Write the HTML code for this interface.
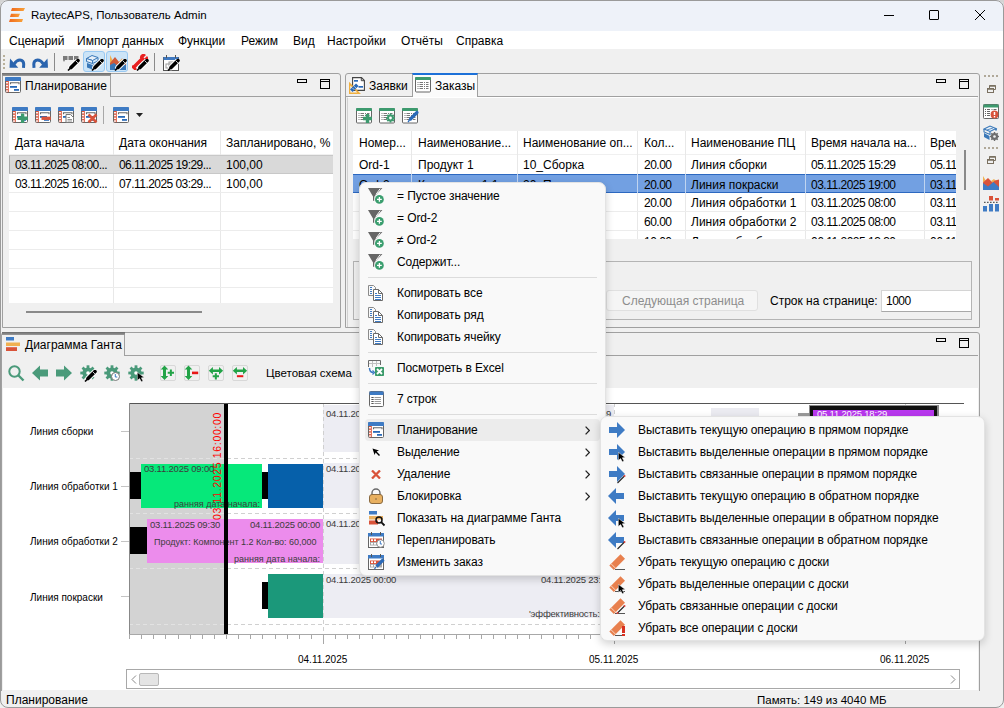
<!DOCTYPE html>
<html><head><meta charset="utf-8">
<style>
*{box-sizing:border-box;margin:0;padding:0}
html,body{width:1004px;height:708px;overflow:hidden;background:#d4d4d4;font-family:"Liberation Sans",sans-serif;font-size:12px;color:#000}
.a{position:absolute}
.t{position:absolute;white-space:nowrap;line-height:14px}
#title{left:0;top:0;width:1004px;height:31px;background:#eef2f9}
#menu{left:0;top:31px;width:1004px;height:18px;background:#fff}
#tb{left:0;top:49px;width:1004px;height:24px;background:#f0f0f0}
.panel{position:absolute;border:1px solid #a0a0a0;border-radius:3px 3px 0 0;background:#f0f0f0}
.tab{position:absolute;border:1px solid #a0a0a0;border-bottom:none;background:#f5f5f5}
.hline{position:absolute;height:1px;background:#a0a0a0}
.n{letter-spacing:-0.5px}
.vline{position:absolute;width:1px;background:#a0a0a0}
</style></head><body>
<svg width="0" height="0" style="position:absolute">
<defs>
<symbol id="plan" viewBox="0 0 16 16"><rect x="0.5" y="0.5" width="15" height="15" rx="1" fill="#fff" stroke="#666"/><path d="M0 1 Q0 0 1 0 H15 Q16 0 16 1 V4 H0Z" fill="#3e7bc4"/><rect x="1" y="4" width="2.8" height="11.2" fill="#d9533a"/><rect x="1.1" y="5" width="1.8" height="1.5" fill="#fff"/><rect x="1.1" y="7.8" width="1.8" height="1.5" fill="#fff"/><rect x="1.1" y="10.6" width="1.8" height="1.5" fill="#fff"/><rect x="1.1" y="13.3" width="1.8" height="1.5" fill="#fff"/><path d="M5.5 7.2 V5.8 H14 V7.2" fill="none" stroke="#666" stroke-width="1.1"/><rect x="5" y="9" width="7" height="1.8" fill="#2a6ab8"/><rect x="9" y="12" width="5" height="1.8" fill="#2a6ab8"/></symbol>
<symbol id="grid" viewBox="0 0 16 16"><rect x="0.5" y="0.5" width="15" height="14.5" rx="1" fill="#fff" stroke="#666"/><path d="M0 1 Q0 0 1 0 H15 Q16 0 16 1 V3 H0Z" fill="#3d9a6e"/><path d="M2.5 5.5 H3.5 M4.5 5.5 H8 M9 5.5 H10 M11 5.5 H13.5 M2.5 7.5 H3.5 M4.5 7.5 H8 M9 7.5 H10 M11 7.5 H13.5 M2.5 9.5 H3.5 M4.5 9.5 H8 M9 9.5 H10 M11 9.5 H13.5 M2.5 11.5 H3.5 M4.5 11.5 H8 M9 11.5 H10 M11 11.5 H13.5" stroke="#555" stroke-width="0.8"/></symbol>
<symbol id="filt" viewBox="0 0 18 18"><path d="M0 1 L14 1 L9 8 L9 15 L6 13 L6 8 Z" fill="#707070"/><circle cx="12.5" cy="13" r="4.5" fill="#3aa06a" stroke="#fff" stroke-width="1"/><path d="M10 13 H15 M12.5 10.5 V15.5" stroke="#fff" stroke-width="1.4"/></symbol>
<symbol id="copy" viewBox="0 0 16 16"><path d="M0.5 0.5 H5.5 L7.5 2.5 V4 M0.5 0.5 V10.5 H5" fill="none" stroke="#8a8a8a"/><path d="M2 2.5 H4 M2 4.5 H4 M2 6.5 H4 M2 8.5 H4" stroke="#3e7bc4" stroke-width="1"/><path d="M5.5 4.5 H10.5 L14.5 8.5 V15.5 H5.5 Z" fill="#fff" stroke="#6a6a6a"/><path d="M10.5 4.5 V8.5 H14.5" fill="none" stroke="#6a6a6a"/><path d="M7 8.5 H9 M7 10.5 H13 M7 12.5 H13 M7 14.5 H13" stroke="#3e7bc4" stroke-width="1"/></symbol>
<symbol id="pen" viewBox="0 0 10 12"><path d="M9 1 L3 8" stroke="#000" stroke-width="3.6" stroke-linecap="round"/><path d="M2.2 8.6 L0.5 11.5" stroke="#000" stroke-width="1.3"/></symbol>
<symbol id="rarr" viewBox="0 0 17 16"><path d="M1 5 H9 V0 L17 8 L9 16 V11 H1 Z" fill="#3e7bc4"/></symbol>
<symbol id="larr" viewBox="0 0 17 16"><path d="M16 5 H8 V0 L0 8 L8 16 V11 H16 Z" fill="#3e7bc4"/></symbol>
<symbol id="cur" viewBox="0 0 9 10"><path d="M0.3 0.3 L0.3 8.5 L2.6 6.6 L4.3 9.8 L6 8.9 L4.3 5.8 L7.3 5.6Z" fill="#000" stroke="#fff" stroke-width="0.5"/></symbol>
<symbol id="eras" viewBox="0 0 18 18"><path d="M12.5 1.2 L17 5.7 L5.8 16.9 L1.3 12.4 Z" fill="#e8804e"/><path d="M3 10.7 L7.5 15.2" stroke="#fbe0d0" stroke-width="0.9"/><path d="M7 16.5 H17" stroke="#555" stroke-width="1"/></symbol>
<symbol id="pen2" viewBox="0 0 13 12"><path d="M11 1.5 L4 8.5" stroke="#fff" stroke-width="5.4" stroke-linecap="round"/><path d="M11 1.5 L4 8.5" stroke="#000" stroke-width="3.6" stroke-linecap="round"/><path d="M8.6 1.6 L10.9 3.9" stroke="#fff" stroke-width="0.8"/><path d="M3.3 9.2 L1 11.5" stroke="#000" stroke-width="1.6"/></symbol>
<symbol id="gear" viewBox="0 0 16 16"><g fill="#4a9a7a"><circle cx="8" cy="8" r="5.6"/><rect x="6.6" y="0.3" width="2.8" height="3" transform="rotate(0 8 8)"/><rect x="6.6" y="0.3" width="2.8" height="3" transform="rotate(45 8 8)"/><rect x="6.6" y="0.3" width="2.8" height="3" transform="rotate(90 8 8)"/><rect x="6.6" y="0.3" width="2.8" height="3" transform="rotate(135 8 8)"/><rect x="6.6" y="0.3" width="2.8" height="3" transform="rotate(180 8 8)"/><rect x="6.6" y="0.3" width="2.8" height="3" transform="rotate(225 8 8)"/><rect x="6.6" y="0.3" width="2.8" height="3" transform="rotate(270 8 8)"/><rect x="6.6" y="0.3" width="2.8" height="3" transform="rotate(315 8 8)"/></g><circle cx="8" cy="8" r="1.8" fill="#fff"/></symbol></defs></svg>
<!-- title bar -->
<div class="a" style="left:0;top:0;width:1004px;height:708px;background:#f0f0f0;border-radius:8px"></div>
<div id="title" class="a" style="border-radius:8px 8px 0 0"></div>
<div class="a" style="left:0;top:0;width:1004px;height:708px;border:1px solid #9a9a9a;border-radius:8px;pointer-events:none;z-index:50"></div>
<svg class="a" style="left:9px;top:8px" width="17" height="15" viewBox="0 0 17 15">
 <defs><linearGradient id="og" x1="0" x2="1"><stop offset="0" stop-color="#f06a1e"/><stop offset="1" stop-color="#f8a23a"/></linearGradient></defs>
 <polygon points="3,0 16,0 14.5,3 2,3" fill="url(#og)"/>
 <polygon points="2,5.7 11,5.7 9.5,8.9 1,8.9" fill="url(#og)"/>
 <polygon points="1,11 14,11 13,14 0,14" fill="url(#og)"/>
</svg>
<div class="t" style="left:31px;top:8px;font-size:11.5px">RaytecAPS, Пользователь Admin</div>
<div class="a" style="left:884px;top:15px;width:10px;height:1px;background:#000"></div>
<div class="a" style="left:929px;top:10px;width:10px;height:10px;border:1px solid #000;border-radius:1px"></div>
<svg class="a" style="left:975px;top:10px" width="10" height="10" viewBox="0 0 10 10"><path d="M0 0L10 10M10 0L0 10" stroke="#000" stroke-width="1"/></svg>
<!-- menu -->
<div id="menu" class="a"></div>
<div class="t" style="left:9px;top:34px">Сценарий</div>
<div class="t" style="left:77px;top:34px">Импорт данных</div>
<div class="t" style="left:178px;top:34px">Функции</div>
<div class="t" style="left:241px;top:34px">Режим</div>
<div class="t" style="left:293px;top:34px">Вид</div>
<div class="t" style="left:327px;top:34px">Настройки</div>
<div class="t" style="left:401px;top:34px">Отчёты</div>
<div class="t" style="left:456px;top:34px">Справка</div>
<!-- toolbar -->
<div id="tb" class="a"></div>
<div class="a" style="left:3px;top:55px;width:2px;height:2px;background:#b8b09a"></div>
<div class="a" style="left:3px;top:59px;width:2px;height:2px;background:#b8b09a"></div>
<div class="a" style="left:3px;top:63px;width:2px;height:2px;background:#b8b09a"></div>
<div class="a" style="left:3px;top:67px;width:2px;height:2px;background:#b8b09a"></div>
<svg class="a" style="left:9px;top:57px" width="17" height="11" viewBox="0 0 16 11"><path d="M0.5 1.5 L0 10.8 L8.8 10.8 Z" fill="#2a64ae"/><path d="M4.5 7.2 C6.5 4 8 3 10.5 3 C13 3 14.2 5 14.2 7 L14 10.8" stroke="#2a64ae" stroke-width="3" fill="none"/></svg>
<svg class="a" style="left:32px;top:57px" width="16" height="11" viewBox="0 0 16 11"><g transform="translate(16,0) scale(-1,1)"><path d="M0.5 1.5 L0 10.8 L8.8 10.8 Z" fill="#2a64ae"/><path d="M4.5 7.2 C6.5 4 8 3 10.5 3 C13 3 14.2 5 14.2 7 L14 10.8" stroke="#2a64ae" stroke-width="3" fill="none"/></g></svg>
<div class="a" style="left:54px;top:53px;width:1px;height:18px;background:#8a8a8a"></div>
<svg class="a" style="left:63px;top:56px" width="16" height="8" viewBox="0 0 16 8"><rect x="0" y="0" width="4.5" height="4" fill="#7a7a7a"/><rect x="5.5" y="0" width="4.5" height="4" fill="#7a7a7a"/><rect x="11" y="0" width="4.5" height="4" fill="#7a7a7a"/><path d="M0 4 L2 4 L1 6 Z" fill="#7a7a7a"/></svg>
<svg class="a" style="left:67px;top:59px" width="13" height="12"><use href="#pen2"/></svg>
<div class="a" style="left:83px;top:51px;width:22px;height:21px;background:#cce4f7;border:1px solid #99c9f2;border-radius:3px"></div>
<div class="a" style="left:106px;top:51px;width:22px;height:21px;background:#cce4f7;border:1px solid #99c9f2;border-radius:3px"></div>
<svg class="a" style="left:86px;top:54px" width="16" height="16" viewBox="0 0 16 16"><path d="M0.5 4.5 L6 1.5 L12 3.5 L6.5 6.5 Z" fill="#e8f0f8" stroke="#3a78b8" stroke-width="1"/><path d="M0.5 4.5 L0.5 7.5 L6.5 9.5 L6.5 6.5 Z" fill="#e8f0f8" stroke="#3a78b8" stroke-width="1"/><path d="M6.5 9.5 L12 7 L12 3.5" fill="none" stroke="#3a78b8"/><path d="M1 9 L6.5 11 L6.5 15.5 L1 13.5 Z" fill="#3a78b8"/><path d="M6.5 11 L11 9 L11 13 L6.5 15.5Z" fill="#2a5f98"/></svg>
<svg class="a" style="left:91px;top:59px" width="13" height="12"><use href="#pen2"/></svg>
<svg class="a" style="left:110px;top:54px" width="16" height="16" viewBox="0 0 16 16"><path d="M0 1 L3 7 L0 9Z" fill="#f0b050"/><path d="M0 9 L5 3 L9 8 L12 4.5 L16 9 L16 16 L0 16Z" fill="#d05a38"/><path d="M9 8 L12 4.5 L14 7 L11 9Z" fill="#f0c070"/><path d="M0 11 L4 9 L8 12 L12 10 L16 11 L16 16 L0 16Z" fill="#3a78b8"/></svg>
<svg class="a" style="left:114px;top:59px" width="13" height="12"><use href="#pen2"/></svg>
<svg class="a" style="left:132px;top:54px" width="16" height="16" viewBox="0 0 16 16"><path d="M2 13 L10 5" stroke="#e82020" stroke-width="3.5" stroke-linecap="round"/><path d="M8 4 A3.5 3.5 0 0 1 14 1 L11.5 3.5 L12.5 4.5 L15 2 A3.5 3.5 0 0 1 12 8Z" fill="#e82020"/><path d="M0 12 L4 16" stroke="#e82020" stroke-width="2.5"/></svg>
<svg class="a" style="left:136px;top:59px" width="13" height="12"><use href="#pen2"/></svg>
<div class="a" style="left:154px;top:53px;width:1px;height:18px;background:#8a8a8a"></div>
<svg class="a" style="left:163px;top:55px" width="17" height="16" viewBox="0 0 17 16"><rect x="0.5" y="2.5" width="15" height="13" fill="#fff" stroke="#555"/><rect x="0.5" y="2" width="15" height="3" fill="#3f78c0"/><rect x="3" y="0" width="1" height="3" fill="#555"/><rect x="12" y="0" width="1" height="3" fill="#555"/><rect x="3" y="9" width="5" height="4" fill="none" stroke="#999"/><rect x="6" y="7" width="5" height="4" fill="none" stroke="#999"/></svg><svg class="a" style="left:167px;top:59px" width="13" height="12"><use href="#pen2"/></svg>

<!-- left panel -->
<div class="panel" style="left:2px;top:73px;width:339px;height:255px"></div>
<div class="a" style="left:2px;top:73px;width:109px;height:3px;background:linear-gradient(#6a6a6a,#9a9a9a)"></div>
<div class="a" style="left:110px;top:75px;width:1px;height:22px;background:#a0a0a0"></div>
<div class="a" style="left:110px;top:96px;width:230px;height:1px;background:#a0a0a0"></div>
<svg class="a" style="left:5px;top:77px" width="16" height="16"><use href="#plan"/></svg>
<div class="t" style="left:25px;top:79px">Планирование</div>
<div class="a" style="left:297px;top:79px;width:10px;height:4px;border:1px solid #000"></div>
<div class="a" style="left:320px;top:79px;width:10px;height:10px;border:1px solid #000"></div><div class="a" style="left:320px;top:81px;width:10px;height:1px;background:#000"></div>
<svg class="a" style="left:12px;top:107px" width="17" height="17" overflow="visible"><use href="#plan" width="16" height="16"/><path d="M5.5 11.3 H15.8 M10.6 6.5 V16" stroke="#3d9a6e" stroke-width="3.4"/></svg>
<svg class="a" style="left:35px;top:107px" width="17" height="17" overflow="visible"><use href="#plan" width="16" height="16"/><path d="M6.5 11.3 H15.8" stroke="#d9533a" stroke-width="3.3"/></svg>
<svg class="a" style="left:58px;top:107px" width="17" height="17" overflow="visible"><use href="#plan" width="16" height="16"/><path d="M8 7.5 H12.5 L15.5 10.5 V15.5 H8 Z" fill="#fff" stroke="#777"/><path d="M9.5 10.5 H12 M9.5 12.5 H14 M9.5 14 H14" stroke="#888" stroke-width="0.9"/></svg>
<svg class="a" style="left:81px;top:107px" width="17" height="17" overflow="visible"><use href="#plan" width="16" height="16"/><path d="M7.5 7.5 L15.5 15.2 M15.5 7.5 L7.5 15.2" stroke="#d9533a" stroke-width="2.6"/></svg>
<div class="a" style="left:103px;top:106px;width:1px;height:18px;background:#a8a8a8"></div>
<svg class="a" style="left:113px;top:107px" width="16" height="16"><use href="#plan"/></svg>
<svg class="a" style="left:136px;top:113px" width="7" height="5"><path d="M0 0 H7 L3.5 4 Z" fill="#222"/></svg>
<div class="a" style="left:9px;top:131px;width:324px;height:172px;background:#fff"></div>
<div class="a" style="left:9px;top:154px;width:324px;height:1px;background:#f0f0f0"></div>
<div class="a" style="left:113px;top:131px;width:1px;height:172px;background:#e8e8e8"></div>
<div class="a" style="left:220px;top:131px;width:1px;height:172px;background:#e8e8e8"></div>
<div class="t" style="left:15px;top:136px">Дата начала</div>
<div class="t" style="left:119px;top:136px">Дата окончания</div>
<div class="t" style="left:226px;top:136px">Запланировано, %</div>
<div class="a" style="left:9px;top:155px;width:324px;height:19px;background:#d9d9d9;border-top:1px solid #c8c8c8;border-bottom:1px solid #c8c8c8;border-left:1px solid #aaa"></div>
<div class="t" style="left:15px;top:158px;letter-spacing:-0.55px">03.11.2025 08:00...</div>
<div class="t" style="left:119px;top:158px;letter-spacing:-0.55px">06.11.2025 19:29...</div>
<div class="t" style="left:226px;top:158px">100,00</div>
<div class="t" style="left:15px;top:177px;letter-spacing:-0.55px">03.11.2025 16:00...</div>
<div class="t" style="left:119px;top:177px;letter-spacing:-0.55px">07.11.2025 03:29...</div>
<div class="t" style="left:226px;top:177px">100,00</div>
<div class="a" style="left:9px;top:192px;width:324px;height:1px;background:#ececec"></div>
<div class="a" style="left:9px;top:211px;width:324px;height:1px;background:#ececec"></div>
<div class="a" style="left:9px;top:230px;width:324px;height:1px;background:#ececec"></div>
<div class="a" style="left:9px;top:249px;width:324px;height:1px;background:#ececec"></div>
<div class="a" style="left:9px;top:268px;width:324px;height:1px;background:#ececec"></div>
<div class="a" style="left:9px;top:287px;width:324px;height:1px;background:#ececec"></div>
<div class="a" style="left:26px;top:311px;width:176px;height:2px;background:#8a8a8a"></div>

<!-- right panel -->
<div class="panel" style="left:345px;top:73px;width:635px;height:255px"></div>
<div class="a" style="left:345px;top:96px;width:67px;height:1px;background:#a0a0a0"></div>
<div class="a" style="left:477px;top:96px;width:501px;height:1px;background:#a0a0a0"></div>
<div class="a" style="left:412px;top:73px;width:66px;height:24px;background:#fbfbfb;border-left:1px solid #a0a0a0;border-right:1px solid #a0a0a0;border-top:2px solid #1c70d8"></div>
<svg class="a" style="left:349px;top:77px" width="17" height="17" viewBox="0 0 17 17"><path d="M3.6 0.6 H12.5 L15.4 3.5 V13.4 H3.6 Z" fill="#fff" stroke="#444" stroke-width="1.1"/><path d="M12.3 0.6 V3.7 H15.4" fill="none" stroke="#444" stroke-width="1"/><rect x="5" y="3" width="4" height="1.7" fill="#2a6ab8"/><rect x="9.5" y="9" width="4.5" height="1.7" fill="#2a6ab8"/><path d="M0.5 6.5 V16.2 H10 Z" fill="none" stroke="#f0b040" stroke-width="1.6"/><path d="M2.3 13.8 L8.3 7.8" stroke="#2a6ab8" stroke-width="3.6"/><path d="M3.5 11 L5.3 12.8 M5.2 9.3 L7 11.1" stroke="#e8f0f8" stroke-width="0.7"/></svg>
<div class="t" style="left:369px;top:79px">Заявки</div>
<svg class="a" style="left:415px;top:77px" width="16" height="16"><use href="#grid"/></svg>
<div class="t" style="left:435px;top:79px">Заказы</div>
<div class="a" style="left:936px;top:79px;width:10px;height:4px;border:1px solid #000"></div>
<div class="a" style="left:959px;top:79px;width:10px;height:10px;border:1px solid #000"></div><div class="a" style="left:959px;top:81px;width:10px;height:1px;background:#000"></div>
<div class="a" style="left:347px;top:97px;width:630px;height:230px;border-left:1px solid #d0d0d0;border-top:1px solid #fff"></div>
<svg class="a" style="left:356px;top:108px" width="17" height="16" overflow="visible"><use href="#grid" width="16" height="16"/><path d="M7 10.5 H16 M11.5 6 V15" stroke="#3d9a6e" stroke-width="3.4"/></svg>
<svg class="a" style="left:379px;top:108px" width="17" height="16" overflow="visible"><use href="#grid" width="16" height="16"/><g fill="#3d9a6e"><rect x="10.6" y="5.5" width="1.8" height="2.4" transform="rotate(0 11.5 10)"/><rect x="10.6" y="5.5" width="1.8" height="2.4" transform="rotate(45 11.5 10)"/><rect x="10.6" y="5.5" width="1.8" height="2.4" transform="rotate(90 11.5 10)"/><rect x="10.6" y="5.5" width="1.8" height="2.4" transform="rotate(135 11.5 10)"/><rect x="10.6" y="5.5" width="1.8" height="2.4" transform="rotate(180 11.5 10)"/><rect x="10.6" y="5.5" width="1.8" height="2.4" transform="rotate(225 11.5 10)"/><rect x="10.6" y="5.5" width="1.8" height="2.4" transform="rotate(270 11.5 10)"/><rect x="10.6" y="5.5" width="1.8" height="2.4" transform="rotate(315 11.5 10)"/><circle cx="11.5" cy="10" r="3.4"/></g><circle cx="11.5" cy="10" r="1.4" fill="#fff"/></svg>
<svg class="a" style="left:402px;top:108px" width="17" height="16" overflow="visible"><use href="#grid" width="16" height="16"/><path d="M15 4.5 L8.5 11" stroke="#2a6ab8" stroke-width="3.2" stroke-linecap="round"/><path d="M7.5 12 L6 14" stroke="#2a6ab8" stroke-width="1.3"/></svg>
<div class="a" style="left:353px;top:131px;width:603px;height:108px;background:#fff;overflow:hidden">
 <div class="a" style="left:0;top:23px;width:603px;height:1px;background:#f0f0f0"></div>
 <div class="a" style="left:58px;top:0;width:1px;height:108px;background:#e8e8e8"></div>
 <div class="a" style="left:164px;top:0;width:1px;height:108px;background:#e8e8e8"></div>
 <div class="a" style="left:284px;top:0;width:1px;height:108px;background:#e8e8e8"></div>
 <div class="a" style="left:332px;top:0;width:1px;height:108px;background:#e8e8e8"></div>
 <div class="a" style="left:452px;top:0;width:1px;height:108px;background:#e8e8e8"></div>
 <div class="a" style="left:571px;top:0;width:1px;height:108px;background:#e8e8e8"></div>
 <div class="a" style="left:0;top:61px;width:603px;height:1px;background:#ececec"></div>
 <div class="a" style="left:0;top:80px;width:603px;height:1px;background:#ececec"></div>
 <div class="a" style="left:0;top:99px;width:603px;height:1px;background:#ececec"></div>
 <div class="t" style="left:6px;top:5px">Номер...</div>
 <div class="t" style="left:65px;top:5px">Наименование...</div>
 <div class="t" style="left:170px;top:5px">Наименование оп...</div>
 <div class="t" style="left:291px;top:5px">Кол...</div>
 <div class="t" style="left:338px;top:5px">Наименование ПЦ</div>
 <div class="t" style="left:458px;top:5px">Время начала на...</div>
 <div class="t" style="left:577px;top:5px">Время</div>
 <div class="t" style="left:6px;top:27px">Ord-1</div>
 <div class="t" style="left:65px;top:27px">Продукт 1</div>
 <div class="t" style="left:170px;top:27px">10_Сборка</div>
 <div class="t n" style="left:291px;top:27px">20.00</div>
 <div class="t" style="left:338px;top:27px">Линия сборки</div>
 <div class="t n" style="left:458px;top:27px">05.11.2025 15:29</div>
 <div class="t n" style="left:577px;top:27px">05.11.2025</div>
 <div class="a" style="left:0;top:43px;width:603px;height:19px;background:#72a0e2;border-top:1px solid #2c68c0;border-bottom:1px solid #2c68c0"></div>
 <div class="a" style="left:58px;top:43px;width:1px;height:19px;background:#c0d4f0"></div>
 <div class="a" style="left:164px;top:43px;width:1px;height:19px;background:#c0d4f0"></div>
 <div class="a" style="left:284px;top:43px;width:1px;height:19px;background:#c0d4f0"></div>
 <div class="a" style="left:332px;top:43px;width:1px;height:19px;background:#c0d4f0"></div>
 <div class="a" style="left:452px;top:43px;width:1px;height:19px;background:#c0d4f0"></div>
 <div class="a" style="left:571px;top:43px;width:1px;height:19px;background:#c0d4f0"></div>
 <div class="t" style="left:6px;top:47px">Ord-2</div>
 <div class="t" style="left:65px;top:47px">Компонент 1.1</div>
 <div class="t" style="left:170px;top:47px">20_Покраска</div>
 <div class="t n" style="left:291px;top:47px">20.00</div>
 <div class="t" style="left:338px;top:47px">Линия покраски</div>
 <div class="t n" style="left:458px;top:47px">03.11.2025 19:00</div>
 <div class="t n" style="left:577px;top:47px">03.11.2025</div>
 <div class="t n" style="left:291px;top:65px">20.00</div>
 <div class="t" style="left:338px;top:65px">Линия обработки 1</div>
 <div class="t n" style="left:458px;top:65px">03.11.2025 08:00</div>
 <div class="t n" style="left:577px;top:65px">03.11.2025</div>
 <div class="t n" style="left:291px;top:84px">60.00</div>
 <div class="t" style="left:338px;top:84px">Линия обработки 2</div>
 <div class="t n" style="left:458px;top:84px">03.11.2025 08:00</div>
 <div class="t n" style="left:577px;top:84px">03.11.2025</div>
 <div class="t n" style="left:291px;top:104px">10.00</div>
 <div class="t" style="left:338px;top:104px">Линия обработки</div>
 <div class="t n" style="left:458px;top:104px">06.11.2025 13:30</div>
 <div class="t n" style="left:577px;top:104px">06.11.2025</div>
</div>
<div class="a" style="left:964px;top:150px;width:2px;height:40px;background:#8a8a8a"></div>
<div class="a" style="left:353px;top:261px;width:619px;height:59px;border:1px solid #b4b4b4"></div>
<div class="a" style="left:606px;top:290px;width:152px;height:21px;background:#f5f5f5;border:1px solid #e0e0e0;border-radius:3px"></div>
<div class="t" style="left:622px;top:294px;color:#8d8d8d">Следующая страница</div>
<div class="t" style="left:770px;top:294px">Строк на странице:</div>
<div class="a" style="left:881px;top:290px;width:90px;height:22px;background:#fff;border:1px solid #d4d4d4;border-bottom-color:#a8a8a8;border-right:none"></div>
<div class="t n" style="left:886px;top:294px">1000</div>
<!-- right strip -->
<div class="a" style="left:984px;top:75px;width:2px;height:2px;background:#b0a898"></div><div class="a" style="left:988px;top:75px;width:2px;height:2px;background:#b0a898"></div><div class="a" style="left:992px;top:75px;width:2px;height:2px;background:#b0a898"></div><div class="a" style="left:996px;top:75px;width:2px;height:2px;background:#b0a898"></div>
<svg class="a" style="left:987px;top:85px" width="9" height="8" viewBox="0 0 9 8"><path d="M2.5 3 V0.5 H8.5 V4.5 H6.5" fill="none" stroke="#7a7060"/><path d="M2.5 1 H8.5" stroke="#7a7060" stroke-width="1.5"/><rect x="0.5" y="3.5" width="6" height="4" fill="#f0f0f0" stroke="#7a7060"/><path d="M0.5 4 H6.5" stroke="#7a7060" stroke-width="1.5"/></svg>
<svg class="a" style="left:983px;top:104px" width="16" height="16" viewBox="0 0 16 16"><rect x="0.5" y="0.5" width="15" height="14" rx="0.8" fill="#fff" stroke="#666"/><rect x="0.5" y="0.5" width="15" height="3" fill="#3d9a6e"/><path d="M2 5.5 H3 M4 5.5 H7 M8.5 5.5 H9.5 M10.5 5.5 H13.5 M2 7.5 H3 M4 7.5 H7 M2 9.5 H3 M4 9.5 H7 M2 11.5 H3 M4 11.5 H7" stroke="#555" stroke-width="0.9"/><circle cx="11.5" cy="10.5" r="3.9" fill="#d9533a"/><path d="M11.5 8 V11" stroke="#fff" stroke-width="1.5"/><rect x="10.8" y="12" width="1.4" height="1.4" fill="#fff"/></svg>
<svg class="a" style="left:983px;top:125px" width="17" height="17" viewBox="0 0 17 17"><path d="M1 4 L7 1 L13 3.5 L7 6.5 Z" fill="#e8f0f8" stroke="#3a78b8" stroke-width="1.1"/><path d="M1 4 V7 L7 9.5 V6.5" fill="none" stroke="#3a78b8" stroke-width="1.1"/><path d="M13 3.5 V5.5" stroke="#3a78b8" stroke-width="1.8"/><path d="M1 8 V12 L6.5 15 V11" fill="#3a78b8"/><path d="M4 5 L10 3" stroke="#3a78b8" stroke-width="0.8"/><g fill="#6e6e6e"><rect x="10.8" y="7" width="1.4" height="2.2" transform="rotate(0 11.5 11.5)"/><rect x="10.8" y="7" width="1.4" height="2.2" transform="rotate(45 11.5 11.5)"/><rect x="10.8" y="7" width="1.4" height="2.2" transform="rotate(90 11.5 11.5)"/><rect x="10.8" y="7" width="1.4" height="2.2" transform="rotate(135 11.5 11.5)"/><rect x="10.8" y="7" width="1.4" height="2.2" transform="rotate(180 11.5 11.5)"/><rect x="10.8" y="7" width="1.4" height="2.2" transform="rotate(225 11.5 11.5)"/><rect x="10.8" y="7" width="1.4" height="2.2" transform="rotate(270 11.5 11.5)"/><rect x="10.8" y="7" width="1.4" height="2.2" transform="rotate(315 11.5 11.5)"/><circle cx="11.5" cy="11.5" r="3.6"/></g><circle cx="11.5" cy="11.5" r="1.3" fill="#f0f0f0"/></svg>
<div class="a" style="left:984px;top:147px;width:2px;height:2px;background:#b0a898"></div><div class="a" style="left:988px;top:147px;width:2px;height:2px;background:#b0a898"></div><div class="a" style="left:992px;top:147px;width:2px;height:2px;background:#b0a898"></div><div class="a" style="left:996px;top:147px;width:2px;height:2px;background:#b0a898"></div>
<svg class="a" style="left:987px;top:156px" width="9" height="8" viewBox="0 0 9 8"><path d="M2.5 3 V0.5 H8.5 V4.5 H6.5" fill="none" stroke="#7a7060"/><path d="M2.5 1 H8.5" stroke="#7a7060" stroke-width="1.5"/><rect x="0.5" y="3.5" width="6" height="4" fill="#f0f0f0" stroke="#7a7060"/><path d="M0.5 4 H6.5" stroke="#7a7060" stroke-width="1.5"/></svg>
<svg class="a" style="left:983px;top:176px" width="16" height="14" viewBox="0 0 16 14"><path d="M0 0 L3 5 L0 6.5 Z" fill="#f0b050"/><path d="M8 5 L11 3 L14 6 L11 8 Z" fill="#f0b050"/><path d="M0 6.5 L5 2 L9.5 6.5 L12 4.5 L16 3.5 L16 12 L0 12 Z" fill="#d9533a"/><path d="M0 7 L5 10.5 L10.5 6 L16 11 L16 14 L0 14 Z" fill="#3e7bc4"/></svg>
<svg class="a" style="left:983px;top:195px" width="16" height="17" viewBox="0 0 16 17"><rect x="0" y="11" width="4" height="5.5" fill="#3e7bc4"/><rect x="6" y="9" width="4" height="7.5" fill="#3e7bc4"/><rect x="12" y="9" width="4" height="7.5" fill="#3e7bc4"/><rect x="6" y="1" width="4" height="4.5" fill="#d9533a"/><rect x="12" y="3" width="4" height="2.5" fill="#d9533a"/><path d="M1 7.3 H16" stroke="#333" stroke-width="1" stroke-dasharray="1.6 1.4"/></svg>

<!-- gantt panel -->
<div class="panel" style="left:1px;top:332px;width:979px;height:360px"></div>
<div class="a" style="left:2px;top:332px;width:123px;height:3px;background:linear-gradient(#6a6a6a,#9a9a9a)"></div>
<div class="a" style="left:124px;top:335px;width:1px;height:21px;background:#a0a0a0"></div>
<div class="a" style="left:124px;top:355px;width:854px;height:1px;background:#a0a0a0"></div>
<svg class="a" style="left:6px;top:337px" width="15" height="15" viewBox="0 0 15 15"><rect x="0" y="0" width="8" height="3.5" fill="#3e7bc4"/><rect x="0" y="5.5" width="14" height="3.5" fill="#f0b050"/><rect x="0" y="10.2" width="11" height="3.8" fill="#d9533a"/></svg>
<div class="t" style="left:25px;top:338px">Диаграмма Ганта</div>
<div class="a" style="left:936px;top:338px;width:10px;height:4px;border:1px solid #000"></div>
<div class="a" style="left:959px;top:338px;width:10px;height:10px;border:1px solid #000"></div><div class="a" style="left:959px;top:340px;width:10px;height:1px;background:#000"></div>
<svg class="a" style="left:8px;top:365px" width="17" height="17" viewBox="0 0 17 17"><circle cx="6.5" cy="6.5" r="5.2" fill="none" stroke="#4a9a7a" stroke-width="2"/><path d="M10.5 10.5 L15.5 15.5" stroke="#4a9a7a" stroke-width="2.4"/></svg>
<svg class="a" style="left:32px;top:365px" width="16" height="16" viewBox="0 0 16 16"><path d="M0 8 L8 0.5 L8 4.5 L16 4.5 L16 11.5 L8 11.5 L8 15.5Z" fill="#4a9a7a"/></svg>
<svg class="a" style="left:56px;top:365px" width="16" height="16" viewBox="0 0 16 16"><path d="M16 8 L8 0.5 L8 4.5 L0 4.5 L0 11.5 L8 11.5 L8 15.5Z" fill="#4a9a7a"/></svg>
<svg class="a" style="left:80px;top:365px" width="17" height="17" viewBox="0 0 17 17"><use href="#gear" x="0" y="0" width="16" height="16"/></svg><svg class="a" style="left:84px;top:370px" width="13" height="12"><use href="#pen2"/></svg>
<svg class="a" style="left:104px;top:365px" width="17" height="17" viewBox="0 0 17 17"><use href="#gear" x="0" y="0" width="16" height="16"/><circle cx="11.5" cy="11.5" r="4" fill="#fff" stroke="#777" stroke-width="1"/><path d="M11.3 9 V12 H13.3" stroke="#3e7bc4" stroke-width="1" fill="none"/></svg>
<svg class="a" style="left:128px;top:365px" width="17" height="17" viewBox="0 0 17 17"><use href="#gear" x="0" y="0" width="16" height="16"/></svg><svg class="a" style="left:137px;top:372px" width="9" height="10"><use href="#cur"/></svg>
<div class="a" style="left:160px;top:365px;width:16px;height:16px;border:1px solid #d8d8d8;border-radius:2px"></div>
<div class="a" style="left:184px;top:365px;width:16px;height:16px;border:1px solid #d8d8d8;border-radius:2px"></div>
<div class="a" style="left:208px;top:365px;width:16px;height:16px;border:1px solid #d8d8d8;border-radius:2px"></div>
<div class="a" style="left:232px;top:365px;width:16px;height:16px;border:1px solid #d8d8d8;border-radius:2px"></div>
<svg class="a" style="left:160px;top:365px" width="16" height="16" viewBox="0 0 16 16"><path d="M4.5 0.5 L8.3 4.6 H6 V10.9 H8.3 L4.5 15 L0.7 10.9 H3 V4.6 H0.7 Z" fill="#22a347"/><path d="M7.7 7.8 H14 M10.85 4.6 V11" stroke="#22a347" stroke-width="2"/></svg>
<svg class="a" style="left:184px;top:365px" width="16" height="16" viewBox="0 0 16 16"><path d="M4.5 0.5 L8.3 4.6 H6 V10.9 H8.3 L4.5 15 L0.7 10.9 H3 V4.6 H0.7 Z" fill="#22a347"/><path d="M8 7.9 H14.2" stroke="#e81818" stroke-width="2.6"/></svg>
<svg class="a" style="left:208px;top:365px" width="16" height="16" viewBox="0 0 16 16"><path d="M0.8 5.7 L4.9 1.9 V4.4 H11 V1.9 L15.1 5.7 L11 9.5 V7 H4.9 V9.5 Z" fill="#22a347"/><path d="M4.7 11.3 H11 M7.85 8.2 V14.5" stroke="#22a347" stroke-width="2"/></svg>
<svg class="a" style="left:232px;top:365px" width="16" height="16" viewBox="0 0 16 16"><path d="M0.8 5.7 L4.9 1.9 V4.4 H11 V1.9 L15.1 5.7 L11 9.5 V7 H4.9 V9.5 Z" fill="#22a347"/><path d="M4.9 11.2 H11.3" stroke="#e81818" stroke-width="2"/></svg>
<div class="t" style="left:266px;top:366px;font-size:11.5px">Цветовая схема</div>
<!-- chart -->
<div class="a" style="left:3px;top:388px;width:975px;height:302px;background:#fff"></div>
<div class="a" style="left:129px;top:403px;width:835px;height:231px;overflow:hidden" id="chart">
 <div class="a" style="left:0;top:0;width:96px;height:231px;background:#d3d3d3"></div>
 <div class="a" style="left:194px;top:2px;width:291px;height:47px;background:#ededf3"></div>
 <div class="a" style="left:194px;top:60px;width:291px;height:45px;background:#ededf3"></div>
 <div class="a" style="left:194px;top:116px;width:291px;height:45px;background:#ededf3"></div>
 <div class="a" style="left:194px;top:171px;width:291px;height:44px;background:#ededf3"></div>
 <div class="a" style="left:0;top:55px;width:835px;height:1px;background:repeating-linear-gradient(90deg,#d0d0d0 0 4px,transparent 4px 7px)"></div>
 <div class="a" style="left:0;top:110px;width:835px;height:1px;background:repeating-linear-gradient(90deg,#d0d0d0 0 4px,transparent 4px 7px)"></div>
 <div class="a" style="left:0;top:165px;width:835px;height:1px;background:repeating-linear-gradient(90deg,#d0d0d0 0 4px,transparent 4px 7px)"></div>
 <div class="a" style="left:0;top:221px;width:835px;height:1px;background:repeating-linear-gradient(90deg,#d0d0d0 0 4px,transparent 4px 7px)"></div>
 <div class="a" style="left:0;top:55px;width:95px;height:1px;background:repeating-linear-gradient(90deg,#e2e2e2 0 4px,transparent 4px 7px)"></div><div class="a" style="left:0;top:110px;width:95px;height:1px;background:repeating-linear-gradient(90deg,#e2e2e2 0 4px,transparent 4px 7px)"></div><div class="a" style="left:0;top:165px;width:95px;height:1px;background:repeating-linear-gradient(90deg,#e2e2e2 0 4px,transparent 4px 7px)"></div><div class="a" style="left:0;top:221px;width:95px;height:1px;background:repeating-linear-gradient(90deg,#e2e2e2 0 4px,transparent 4px 7px)"></div><div class="a" style="left:194px;top:0;width:1px;height:231px;background:repeating-linear-gradient(180deg,#d0d0d0 0 4px,transparent 4px 7px)"></div>
 <div class="a" style="left:485px;top:0;width:1px;height:231px;background:repeating-linear-gradient(180deg,#d0d0d0 0 4px,transparent 4px 7px)"></div>
 <div class="a" style="left:776px;top:0;width:1px;height:231px;background:repeating-linear-gradient(180deg,#d0d0d0 0 4px,transparent 4px 7px)"></div>
 <!-- bars -->
 <div class="a" style="left:0;top:69px;width:12px;height:27px;background:#000"></div>
 <div class="a" style="left:12px;top:61px;width:121px;height:44px;background:#06e87a"></div>
 <div class="a" style="left:133px;top:69px;width:6px;height:27px;background:#000"></div>
 <div class="a" style="left:139px;top:61px;width:55px;height:44px;background:#0660aa"></div>
 <div class="a" style="left:0;top:124px;width:18px;height:27px;background:#000"></div>
 <div class="a" style="left:18px;top:116px;width:176px;height:44px;background:#ec8cec"></div>
 <div class="a" style="left:133px;top:179px;width:6px;height:27px;background:#000"></div>
 <div class="a" style="left:139px;top:171px;width:55px;height:44px;background:#1b987a"></div>
 <div class="a" style="left:582px;top:5px;width:48px;height:20px;background:#ebebf1"></div>
 <div class="t" style="left:15px;top:59px;font-size:9.5px;letter-spacing:-0.2px;color:#3c3c3c">03.11.2025 09:00</div>
 <div class="t" style="left:45px;top:94px;font-size:9px;color:#3c3c3c">ранняя дата начала:</div>
 <div class="t" style="left:21px;top:115px;font-size:9.5px;letter-spacing:-0.2px;color:#3c3c3c">03.11.2025 09:30</div>
 <div class="t" style="left:121px;top:115px;font-size:9.5px;letter-spacing:-0.2px;color:#3c3c3c">04.11.2025 00:00</div>
 <div class="t" style="left:25px;top:132px;font-size:9px;color:#3c3c3c">Продукт: Компонент 1.2 Кол-во: 60,000</div>
 <div class="t" style="left:105px;top:149px;font-size:9px;color:#3c3c3c">ранняя дата начала:</div>
 <div class="t" style="left:197px;top:4px;font-size:9.5px;letter-spacing:-0.2px;color:#3c3c3c">04.11.2025 00:00</div>
 <div class="t" style="left:197px;top:59px;font-size:9.5px;letter-spacing:-0.2px;color:#3c3c3c">04.11.2025 00:00</div>
 <div class="t" style="left:197px;top:114px;font-size:9.5px;letter-spacing:-0.2px;color:#3c3c3c">04.11.2025 00:00</div>
 <div class="t" style="left:197px;top:170px;font-size:9.5px;letter-spacing:-0.2px;color:#3c3c3c">04.11.2025 00:00</div>
 <div class="t" style="left:412px;top:170px;font-size:9.5px;letter-spacing:-0.2px;color:#3c3c3c">04.11.2025 23:59</div><div class="t" style="left:412px;top:4px;font-size:9.5px;letter-spacing:-0.2px;color:#3c3c3c">04.11.2025 23:59</div><div class="t" style="left:412px;top:59px;font-size:9.5px;letter-spacing:-0.2px;color:#3c3c3c">04.11.2025 23:59</div><div class="t" style="left:412px;top:114px;font-size:9.5px;letter-spacing:-0.2px;color:#3c3c3c">04.11.2025 23:59</div>
 <div class="t" style="left:400px;top:204px;font-size:9.5px;letter-spacing:-0.2px;color:#3c3c3c">'эффективность:0</div>
 <div class="a" style="left:669px;top:10px;width:14px;height:20px;background:#9a9a9a"></div><div class="a" style="left:680px;top:2px;width:130px;height:30px;background:#8a8a8a"></div><div class="a" style="left:681px;top:3px;width:127px;height:30px;background:#111"></div><div class="a" style="left:684px;top:6.5px;width:121px;height:30px;background:#b838ee"></div>
 <div class="t" style="left:688px;top:4px;font-size:9.5px;letter-spacing:-0.2px;color:#fff">05.11.2025 18:29</div>
 <div class="a" style="left:95px;top:0;width:4px;height:231px;background:#000"></div>
 <div class="t" style="font-size:10.5px;letter-spacing:0.65px;color:#f00;transform:rotate(-90deg);transform-origin:0 0;left:81px;top:117px;width:110px">03.11.2025 16:00:00</div>
</div>
<div class="a" style="left:129px;top:403px;width:835px;height:1px;background:#555"></div>
<div class="a" style="left:129px;top:403px;width:1px;height:231px;background:#888"></div>
<div class="a" style="left:129px;top:634px;width:835px;height:1px;background:#a8a8a8"></div>
<div class="a" style="left:129.0px;top:634px;width:1px;height:5px;background:#a8a8a8"></div><div class="a" style="left:141.1px;top:634px;width:1px;height:5px;background:#a8a8a8"></div><div class="a" style="left:153.2px;top:634px;width:1px;height:5px;background:#a8a8a8"></div><div class="a" style="left:165.4px;top:634px;width:1px;height:5px;background:#a8a8a8"></div><div class="a" style="left:177.5px;top:634px;width:1px;height:5px;background:#a8a8a8"></div><div class="a" style="left:189.6px;top:634px;width:1px;height:5px;background:#a8a8a8"></div><div class="a" style="left:201.8px;top:634px;width:1px;height:5px;background:#a8a8a8"></div><div class="a" style="left:213.9px;top:634px;width:1px;height:5px;background:#a8a8a8"></div><div class="a" style="left:226.0px;top:634px;width:1px;height:5px;background:#a8a8a8"></div><div class="a" style="left:238.1px;top:634px;width:1px;height:5px;background:#a8a8a8"></div><div class="a" style="left:250.2px;top:634px;width:1px;height:5px;background:#a8a8a8"></div><div class="a" style="left:262.4px;top:634px;width:1px;height:5px;background:#a8a8a8"></div><div class="a" style="left:274.5px;top:634px;width:1px;height:5px;background:#a8a8a8"></div><div class="a" style="left:286.6px;top:634px;width:1px;height:5px;background:#a8a8a8"></div><div class="a" style="left:298.8px;top:634px;width:1px;height:5px;background:#a8a8a8"></div><div class="a" style="left:310.9px;top:634px;width:1px;height:5px;background:#a8a8a8"></div><div class="a" style="left:323.0px;top:634px;width:1px;height:10px;background:#a8a8a8"></div><div class="a" style="left:335.1px;top:634px;width:1px;height:5px;background:#a8a8a8"></div><div class="a" style="left:347.2px;top:634px;width:1px;height:5px;background:#a8a8a8"></div><div class="a" style="left:359.4px;top:634px;width:1px;height:5px;background:#a8a8a8"></div><div class="a" style="left:371.5px;top:634px;width:1px;height:5px;background:#a8a8a8"></div><div class="a" style="left:383.6px;top:634px;width:1px;height:5px;background:#a8a8a8"></div><div class="a" style="left:395.8px;top:634px;width:1px;height:5px;background:#a8a8a8"></div><div class="a" style="left:407.9px;top:634px;width:1px;height:5px;background:#a8a8a8"></div><div class="a" style="left:420.0px;top:634px;width:1px;height:5px;background:#a8a8a8"></div><div class="a" style="left:432.1px;top:634px;width:1px;height:5px;background:#a8a8a8"></div><div class="a" style="left:444.2px;top:634px;width:1px;height:5px;background:#a8a8a8"></div><div class="a" style="left:456.4px;top:634px;width:1px;height:5px;background:#a8a8a8"></div><div class="a" style="left:468.5px;top:634px;width:1px;height:5px;background:#a8a8a8"></div><div class="a" style="left:480.6px;top:634px;width:1px;height:5px;background:#a8a8a8"></div><div class="a" style="left:492.8px;top:634px;width:1px;height:5px;background:#a8a8a8"></div><div class="a" style="left:504.9px;top:634px;width:1px;height:5px;background:#a8a8a8"></div><div class="a" style="left:517.0px;top:634px;width:1px;height:5px;background:#a8a8a8"></div><div class="a" style="left:529.1px;top:634px;width:1px;height:5px;background:#a8a8a8"></div><div class="a" style="left:541.2px;top:634px;width:1px;height:5px;background:#a8a8a8"></div><div class="a" style="left:553.4px;top:634px;width:1px;height:5px;background:#a8a8a8"></div><div class="a" style="left:565.5px;top:634px;width:1px;height:5px;background:#a8a8a8"></div><div class="a" style="left:577.6px;top:634px;width:1px;height:5px;background:#a8a8a8"></div><div class="a" style="left:589.8px;top:634px;width:1px;height:5px;background:#a8a8a8"></div><div class="a" style="left:601.9px;top:634px;width:1px;height:5px;background:#a8a8a8"></div><div class="a" style="left:614.0px;top:634px;width:1px;height:10px;background:#a8a8a8"></div><div class="a" style="left:626.1px;top:634px;width:1px;height:5px;background:#a8a8a8"></div><div class="a" style="left:638.2px;top:634px;width:1px;height:5px;background:#a8a8a8"></div><div class="a" style="left:650.4px;top:634px;width:1px;height:5px;background:#a8a8a8"></div><div class="a" style="left:662.5px;top:634px;width:1px;height:5px;background:#a8a8a8"></div><div class="a" style="left:674.6px;top:634px;width:1px;height:5px;background:#a8a8a8"></div><div class="a" style="left:686.8px;top:634px;width:1px;height:5px;background:#a8a8a8"></div><div class="a" style="left:698.9px;top:634px;width:1px;height:5px;background:#a8a8a8"></div><div class="a" style="left:711.0px;top:634px;width:1px;height:5px;background:#a8a8a8"></div><div class="a" style="left:723.1px;top:634px;width:1px;height:5px;background:#a8a8a8"></div><div class="a" style="left:735.2px;top:634px;width:1px;height:5px;background:#a8a8a8"></div><div class="a" style="left:747.4px;top:634px;width:1px;height:5px;background:#a8a8a8"></div><div class="a" style="left:759.5px;top:634px;width:1px;height:5px;background:#a8a8a8"></div><div class="a" style="left:771.6px;top:634px;width:1px;height:5px;background:#a8a8a8"></div><div class="a" style="left:783.8px;top:634px;width:1px;height:5px;background:#a8a8a8"></div><div class="a" style="left:795.9px;top:634px;width:1px;height:5px;background:#a8a8a8"></div><div class="a" style="left:808.0px;top:634px;width:1px;height:5px;background:#a8a8a8"></div><div class="a" style="left:820.1px;top:634px;width:1px;height:5px;background:#a8a8a8"></div><div class="a" style="left:832.2px;top:634px;width:1px;height:5px;background:#a8a8a8"></div><div class="a" style="left:844.4px;top:634px;width:1px;height:5px;background:#a8a8a8"></div><div class="a" style="left:856.5px;top:634px;width:1px;height:5px;background:#a8a8a8"></div><div class="a" style="left:868.6px;top:634px;width:1px;height:5px;background:#a8a8a8"></div><div class="a" style="left:880.8px;top:634px;width:1px;height:5px;background:#a8a8a8"></div><div class="a" style="left:892.9px;top:634px;width:1px;height:5px;background:#a8a8a8"></div><div class="a" style="left:905.0px;top:634px;width:1px;height:10px;background:#a8a8a8"></div><div class="a" style="left:917.1px;top:634px;width:1px;height:5px;background:#a8a8a8"></div><div class="a" style="left:929.2px;top:634px;width:1px;height:5px;background:#a8a8a8"></div><div class="a" style="left:941.4px;top:634px;width:1px;height:5px;background:#a8a8a8"></div><div class="a" style="left:953.5px;top:634px;width:1px;height:5px;background:#a8a8a8"></div>
<div class="a" style="left:121px;top:431px;width:8px;height:1px;background:#c4c4c4"></div>
<div class="a" style="left:121px;top:486px;width:8px;height:1px;background:#c4c4c4"></div>
<div class="a" style="left:121px;top:541px;width:8px;height:1px;background:#c4c4c4"></div>
<div class="a" style="left:121px;top:596px;width:8px;height:1px;background:#c4c4c4"></div>
<div class="t" style="left:30px;top:426px;font-size:10px;line-height:12px">Линия сборки</div>
<div class="t" style="left:30px;top:481px;font-size:10px;line-height:12px">Линия обработки 1</div>
<div class="t" style="left:30px;top:536px;font-size:10px;line-height:12px">Линия обработки 2</div>
<div class="t" style="left:30px;top:592px;font-size:10px;line-height:12px">Линия покраски</div>
<div class="t" style="left:298px;top:654px;font-size:10px;line-height:12px">04.11.2025</div>
<div class="t" style="left:589px;top:654px;font-size:10px;line-height:12px">05.11.2025</div>
<div class="t" style="left:880px;top:654px;font-size:10px;line-height:12px">06.11.2025</div>
<div class="a" style="left:126px;top:669px;width:834px;height:20px;background:#fff;border:1px solid #a8a8a8"></div>
<svg class="a" style="left:131px;top:675px" width="6" height="9" viewBox="0 0 6 9"><path d="M5 0.5 L1 4.5 L5 8.5" stroke="#888" fill="none"/></svg>
<svg class="a" style="left:950px;top:675px" width="6" height="9" viewBox="0 0 6 9"><path d="M1 0.5 L5 4.5 L1 8.5" stroke="#888" fill="none"/></svg>
<div class="a" style="left:139px;top:673px;width:20px;height:13px;background:#e4e4e4;border:1px solid #b8b8b8;border-radius:2px"></div>


<!-- context menu -->
<div class="a" style="left:359px;top:182px;width:247px;height:394px;background:#f9f9f9;border:1px solid #e3e3e3;border-radius:7px;box-shadow:0 3px 8px rgba(0,0,0,0.18)"></div>
<div class="a" style="left:365px;top:419px;width:235px;height:22px;background:#ececec;border-radius:4px"></div>
<svg class="a" style="left:368px;top:188px" width="17" height="17" viewBox="0 0 17 17"><path d="M0 0 H14.4 L6.4 8.6 V12.8 H5 V8.4 Z" fill="#666"/><path d="M12.2 0.6 L8 6.4" stroke="#f9f9f9" stroke-width="1"/><circle cx="11.4" cy="11.4" r="5" fill="#f9f9f9"/><circle cx="11.4" cy="11.4" r="4.4" fill="#3a9e6e"/><path d="M9 11.4 H13.8 M11.4 9 V13.8" stroke="#fff" stroke-width="1.3"/></svg>
<div class="t" style="left:397px;top:189px;letter-spacing:-0.1px">= Пустое значение</div>
<svg class="a" style="left:368px;top:210px" width="17" height="17" viewBox="0 0 17 17"><path d="M0 0 H14.4 L6.4 8.6 V12.8 H5 V8.4 Z" fill="#666"/><path d="M12.2 0.6 L8 6.4" stroke="#f9f9f9" stroke-width="1"/><circle cx="11.4" cy="11.4" r="5" fill="#f9f9f9"/><circle cx="11.4" cy="11.4" r="4.4" fill="#3a9e6e"/><path d="M9 11.4 H13.8 M11.4 9 V13.8" stroke="#fff" stroke-width="1.3"/></svg>
<div class="t" style="left:397px;top:211px;letter-spacing:-0.1px">= Ord-2</div>
<svg class="a" style="left:368px;top:232px" width="17" height="17" viewBox="0 0 17 17"><path d="M0 0 H14.4 L6.4 8.6 V12.8 H5 V8.4 Z" fill="#666"/><path d="M12.2 0.6 L8 6.4" stroke="#f9f9f9" stroke-width="1"/><circle cx="11.4" cy="11.4" r="5" fill="#f9f9f9"/><circle cx="11.4" cy="11.4" r="4.4" fill="#3a9e6e"/><path d="M9 11.4 H13.8 M11.4 9 V13.8" stroke="#fff" stroke-width="1.3"/></svg>
<div class="t" style="left:397px;top:233px;letter-spacing:-0.1px">≠ Ord-2</div>
<svg class="a" style="left:368px;top:254px" width="17" height="17" viewBox="0 0 17 17"><path d="M0 0 H14.4 L6.4 8.6 V12.8 H5 V8.4 Z" fill="#666"/><path d="M12.2 0.6 L8 6.4" stroke="#f9f9f9" stroke-width="1"/><circle cx="11.4" cy="11.4" r="5" fill="#f9f9f9"/><circle cx="11.4" cy="11.4" r="4.4" fill="#3a9e6e"/><path d="M9 11.4 H13.8 M11.4 9 V13.8" stroke="#fff" stroke-width="1.3"/></svg>
<div class="t" style="left:397px;top:255px;letter-spacing:-0.1px">Содержит...</div>
<div class="a" style="left:368px;top:277px;width:229px;height:1px;background:#dcdcdc"></div>
<svg class="a" style="left:368px;top:285px" width="16" height="16"><use href="#copy"/></svg>
<div class="t" style="left:397px;top:286px;letter-spacing:-0.1px">Копировать все</div>
<svg class="a" style="left:368px;top:307px" width="16" height="16"><use href="#copy"/></svg>
<div class="t" style="left:397px;top:308px;letter-spacing:-0.1px">Копировать ряд</div>
<svg class="a" style="left:368px;top:329px" width="16" height="16"><use href="#copy"/></svg>
<div class="t" style="left:397px;top:330px;letter-spacing:-0.1px">Копировать ячейку</div>
<div class="a" style="left:368px;top:352px;width:229px;height:1px;background:#dcdcdc"></div>
<svg class="a" style="left:368px;top:360px" width="17" height="17" viewBox="0 0 17 17"><path d="M0.5 7 V0.5 H12.5 V5" fill="none" stroke="#6a6a6a" stroke-width="1"/><path d="M1 3.5 H12 M4.5 1 V7 M8.5 1 V6" stroke="#c0c0c0" stroke-width="1"/><path d="M1.5 8 C1.5 11 3 12.5 5.5 12.5" stroke="#3e7bc4" stroke-width="1.5" fill="none"/><path d="M4.5 10.5 L6.5 12.5 L4.5 14.5" stroke="#3e7bc4" stroke-width="1.3" fill="none"/><rect x="7" y="7" width="9" height="9" rx="0.8" fill="#3a9a6a"/><path d="M9 9 L14 14 M14 9 L9 14" stroke="#fff" stroke-width="1.8"/></svg>
<div class="t" style="left:397px;top:361px;letter-spacing:-0.1px">Посмотреть в Excel</div>
<div class="a" style="left:368px;top:383px;width:229px;height:1px;background:#dcdcdc"></div>
<svg class="a" style="left:369px;top:391px" width="15" height="16" viewBox="0 0 15 16"><rect x="0.5" y="0.5" width="14" height="15" rx="1" fill="#fff" stroke="#666"/><rect x="0.5" y="0.5" width="14" height="3.5" fill="#3e7bc4"/><path d="M2.5 6.5 H4.5 M5.5 6.5 H12 M2.5 8.5 H4.5 M5.5 8.5 H12 M2.5 10.5 H4.5 M5.5 10.5 H12 M2.5 12.5 H4.5 M5.5 12.5 H12" stroke="#999"/><path d="M2.5 6.5 H4.5 M2.5 8.5 H4.5 M2.5 10.5 H4.5 M2.5 12.5 H4.5" stroke="#555"/></svg>
<div class="t" style="left:397px;top:392px;letter-spacing:-0.1px">7 строк</div>
<div class="a" style="left:368px;top:414px;width:229px;height:1px;background:#dcdcdc"></div>
<svg class="a" style="left:368px;top:422px" width="16" height="16"><use href="#plan"/></svg>
<div class="t" style="left:397px;top:423px;letter-spacing:-0.1px">Планирование</div>
<svg class="a" style="left:585px;top:426px" width="5" height="9" viewBox="0 0 5 9"><path d="M0.6 0.6 L4.4 4.5 L0.6 8.4" stroke="#222" stroke-width="1.3" fill="none"/></svg>
<svg class="a" style="left:372px;top:448px" width="9" height="9" viewBox="0 0 9 9"><path d="M0.5 0.5 L7 2.6 L4.6 3.6 L8 7 L7 8 L3.6 4.6 L2.6 7 Z" fill="#000"/></svg>
<div class="t" style="left:397px;top:445px;letter-spacing:-0.1px">Выделение</div>
<svg class="a" style="left:585px;top:448px" width="5" height="9" viewBox="0 0 5 9"><path d="M0.6 0.6 L4.4 4.5 L0.6 8.4" stroke="#222" stroke-width="1.3" fill="none"/></svg>
<svg class="a" style="left:371px;top:470px" width="10" height="9" viewBox="0 0 10 9"><path d="M1 0.5 L9 8.5 M9 0.5 L1 8.5" stroke="#d9533a" stroke-width="2.3"/></svg>
<div class="t" style="left:397px;top:467px;letter-spacing:-0.1px">Удаление</div>
<svg class="a" style="left:585px;top:470px" width="5" height="9" viewBox="0 0 5 9"><path d="M0.6 0.6 L4.4 4.5 L0.6 8.4" stroke="#222" stroke-width="1.3" fill="none"/></svg>
<svg class="a" style="left:368px;top:488px" width="16" height="16" viewBox="0 0 16 16"><path d="M4 7 V5 A4 4 0 0 1 12 5 V7" stroke="#6a6a6a" stroke-width="1.4" fill="none"/><rect x="1.5" y="6.5" width="13" height="9" rx="2.5" fill="#e8b060" stroke="#8a6a40"/><rect x="7.5" y="10" width="1" height="2" fill="#8a6a40"/></svg>
<div class="t" style="left:397px;top:489px;letter-spacing:-0.1px">Блокировка</div>
<svg class="a" style="left:585px;top:492px" width="5" height="9" viewBox="0 0 5 9"><path d="M0.6 0.6 L4.4 4.5 L0.6 8.4" stroke="#222" stroke-width="1.3" fill="none"/></svg>
<svg class="a" style="left:369px;top:511px" width="17" height="16" viewBox="0 0 17 16"><rect x="0" y="0" width="8" height="3.5" fill="#3e7bc4"/><rect x="0" y="5" width="14" height="3.5" fill="#eab060"/><rect x="0" y="9.5" width="9" height="4" fill="#d9533a"/><circle cx="10" cy="9" r="3" fill="none" stroke="#111" stroke-width="1.5"/><path d="M12.2 11.2 L15.5 14.5" stroke="#111" stroke-width="1.8"/></svg>
<div class="t" style="left:397px;top:511px;letter-spacing:-0.1px">Показать на диаграмме Ганта</div>
<svg class="a" style="left:368px;top:532px" width="17" height="17" viewBox="0 0 17 17"><rect x="0.5" y="1.5" width="15" height="14" fill="#fff" stroke="#666"/><path d="M0 1 H16 V4.5 H0Z" fill="#3e7bc4"/><path d="M3.5 0 V3 M12.5 0 V3" stroke="#555" stroke-width="1"/><rect x="2" y="6.5" width="12" height="3.5" fill="#d9533a"/><rect x="3" y="7.3" width="2" height="1.8" fill="#fff"/><rect x="6" y="7.3" width="2" height="1.8" fill="#fff"/><rect x="2" y="10" width="12" height="3.5" fill="#a8a8a8"/><rect x="3" y="10.8" width="2" height="1.8" fill="#fff"/><rect x="6" y="10.8" width="2" height="1.8" fill="#fff"/><circle cx="12.5" cy="11.5" r="3.8" fill="#fff" stroke="#888" stroke-width="0.9"/><path d="M12.3 9 V12 H14" stroke="#3e7bc4" stroke-width="1" fill="none"/></svg>
<div class="t" style="left:397px;top:533px;letter-spacing:-0.1px">Перепланировать</div>
<svg class="a" style="left:368px;top:554px" width="17" height="17" viewBox="0 0 17 17"><rect x="0.5" y="1.5" width="15" height="14" fill="#fff" stroke="#666"/><path d="M0 1 H16 V4.5 H0Z" fill="#3e7bc4"/><path d="M3.5 0 V3 M12.5 0 V3" stroke="#555" stroke-width="1"/><rect x="2" y="6.5" width="12" height="3.5" fill="#d9533a"/><rect x="3" y="7.3" width="2" height="1.8" fill="#fff"/><rect x="6" y="7.3" width="2" height="1.8" fill="#fff"/><rect x="2" y="10" width="12" height="3.5" fill="#a8a8a8"/><rect x="3" y="10.8" width="2" height="1.8" fill="#fff"/><rect x="6" y="10.8" width="2" height="1.8" fill="#fff"/><path d="M15.5 5.5 L8.5 12.5" stroke="#2a6ab8" stroke-width="3.2"/><path d="M7.8 13.2 L6.5 15" stroke="#2a6ab8" stroke-width="1.2"/></svg>
<div class="t" style="left:397px;top:555px;letter-spacing:-0.1px">Изменить заказ</div>
<div class="a" style="left:600px;top:416px;width:385px;height:225px;background:#f9f9f9;border:1px solid #e3e3e3;border-radius:7px;box-shadow:0 3px 8px rgba(0,0,0,0.18)"></div>
<svg class="a" style="left:608px;top:422px" width="17" height="16"><use href="#rarr"/></svg>
<div class="t" style="left:638px;top:423px;letter-spacing:-0.1px">Выставить текущую операцию в прямом порядке</div>
<svg class="a" style="left:608px;top:444px" width="17" height="16"><use href="#rarr"/></svg>
<svg class="a" style="left:618px;top:452px" width="9" height="10"><use href="#cur"/></svg>
<div class="t" style="left:638px;top:445px;letter-spacing:-0.1px">Выставить выделенные операции в прямом порядке</div>
<svg class="a" style="left:608px;top:466px" width="17" height="16"><use href="#rarr"/></svg>
<svg class="a" style="left:616px;top:475px" width="10" height="9" viewBox="0 0 10 9"><path d="M8.5 1 L1.5 8" stroke="#222" stroke-width="1.1"/><circle cx="8.5" cy="1" r="1" fill="#d9403a"/></svg>
<div class="t" style="left:638px;top:467px;letter-spacing:-0.1px">Выставить связанные операции в прямом порядке</div>
<svg class="a" style="left:608px;top:488px" width="17" height="16"><use href="#larr"/></svg>
<div class="t" style="left:638px;top:489px;letter-spacing:-0.1px">Выставить текущую операцию в обратном порядке</div>
<svg class="a" style="left:608px;top:510px" width="17" height="16"><use href="#larr"/></svg>
<svg class="a" style="left:618px;top:518px" width="9" height="10"><use href="#cur"/></svg>
<div class="t" style="left:638px;top:511px;letter-spacing:-0.1px">Выставить выделенные операции в обратном порядке</div>
<svg class="a" style="left:608px;top:532px" width="17" height="16"><use href="#larr"/></svg>
<svg class="a" style="left:616px;top:541px" width="10" height="9" viewBox="0 0 10 9"><path d="M8.5 1 L1.5 8" stroke="#222" stroke-width="1.1"/><circle cx="8.5" cy="1" r="1" fill="#d9403a"/></svg>
<div class="t" style="left:638px;top:533px;letter-spacing:-0.1px">Выставить связанные операции в обратном порядке</div>
<svg class="a" style="left:608px;top:553px" width="18" height="18"><use href="#eras"/></svg>

<div class="t" style="left:638px;top:555px;letter-spacing:-0.1px">Убрать текущую операцию с доски</div>
<svg class="a" style="left:608px;top:575px" width="18" height="18"><use href="#eras"/></svg>
<svg class="a" style="left:618px;top:584px" width="9" height="10"><use href="#cur"/></svg>
<div class="t" style="left:638px;top:577px;letter-spacing:-0.1px">Убрать выделенные операции с доски</div>
<svg class="a" style="left:608px;top:597px" width="18" height="18"><use href="#eras"/></svg>
<svg class="a" style="left:616px;top:605px" width="10" height="9" viewBox="0 0 10 9"><path d="M8.5 1 L1.5 8" stroke="#222" stroke-width="1.1"/><circle cx="8.5" cy="1" r="1" fill="#d9403a"/><circle cx="1.5" cy="8" r="1" fill="#d9403a"/></svg>
<div class="t" style="left:638px;top:599px;letter-spacing:-0.1px">Убрать связанные операции с доски</div>
<svg class="a" style="left:608px;top:619px" width="18" height="18"><use href="#eras"/></svg>
<div class="a" style="left:622px;top:626px;width:3px;height:7px;background:#d83020"></div><div class="a" style="left:622px;top:634px;width:3px;height:2px;background:#d83020"></div>
<div class="t" style="left:638px;top:621px;letter-spacing:-0.1px">Убрать все операции с доски</div>
<!-- status bar -->
<div class="a" style="left:0;top:691px;width:1004px;height:17px;background:#f0f0f0"></div>
<div class="t" style="left:6px;top:693px">Планирование</div>
<div class="t" style="left:757px;top:693px;font-size:11.5px">Память: 149 из 4040 МБ</div>
</body></html>
